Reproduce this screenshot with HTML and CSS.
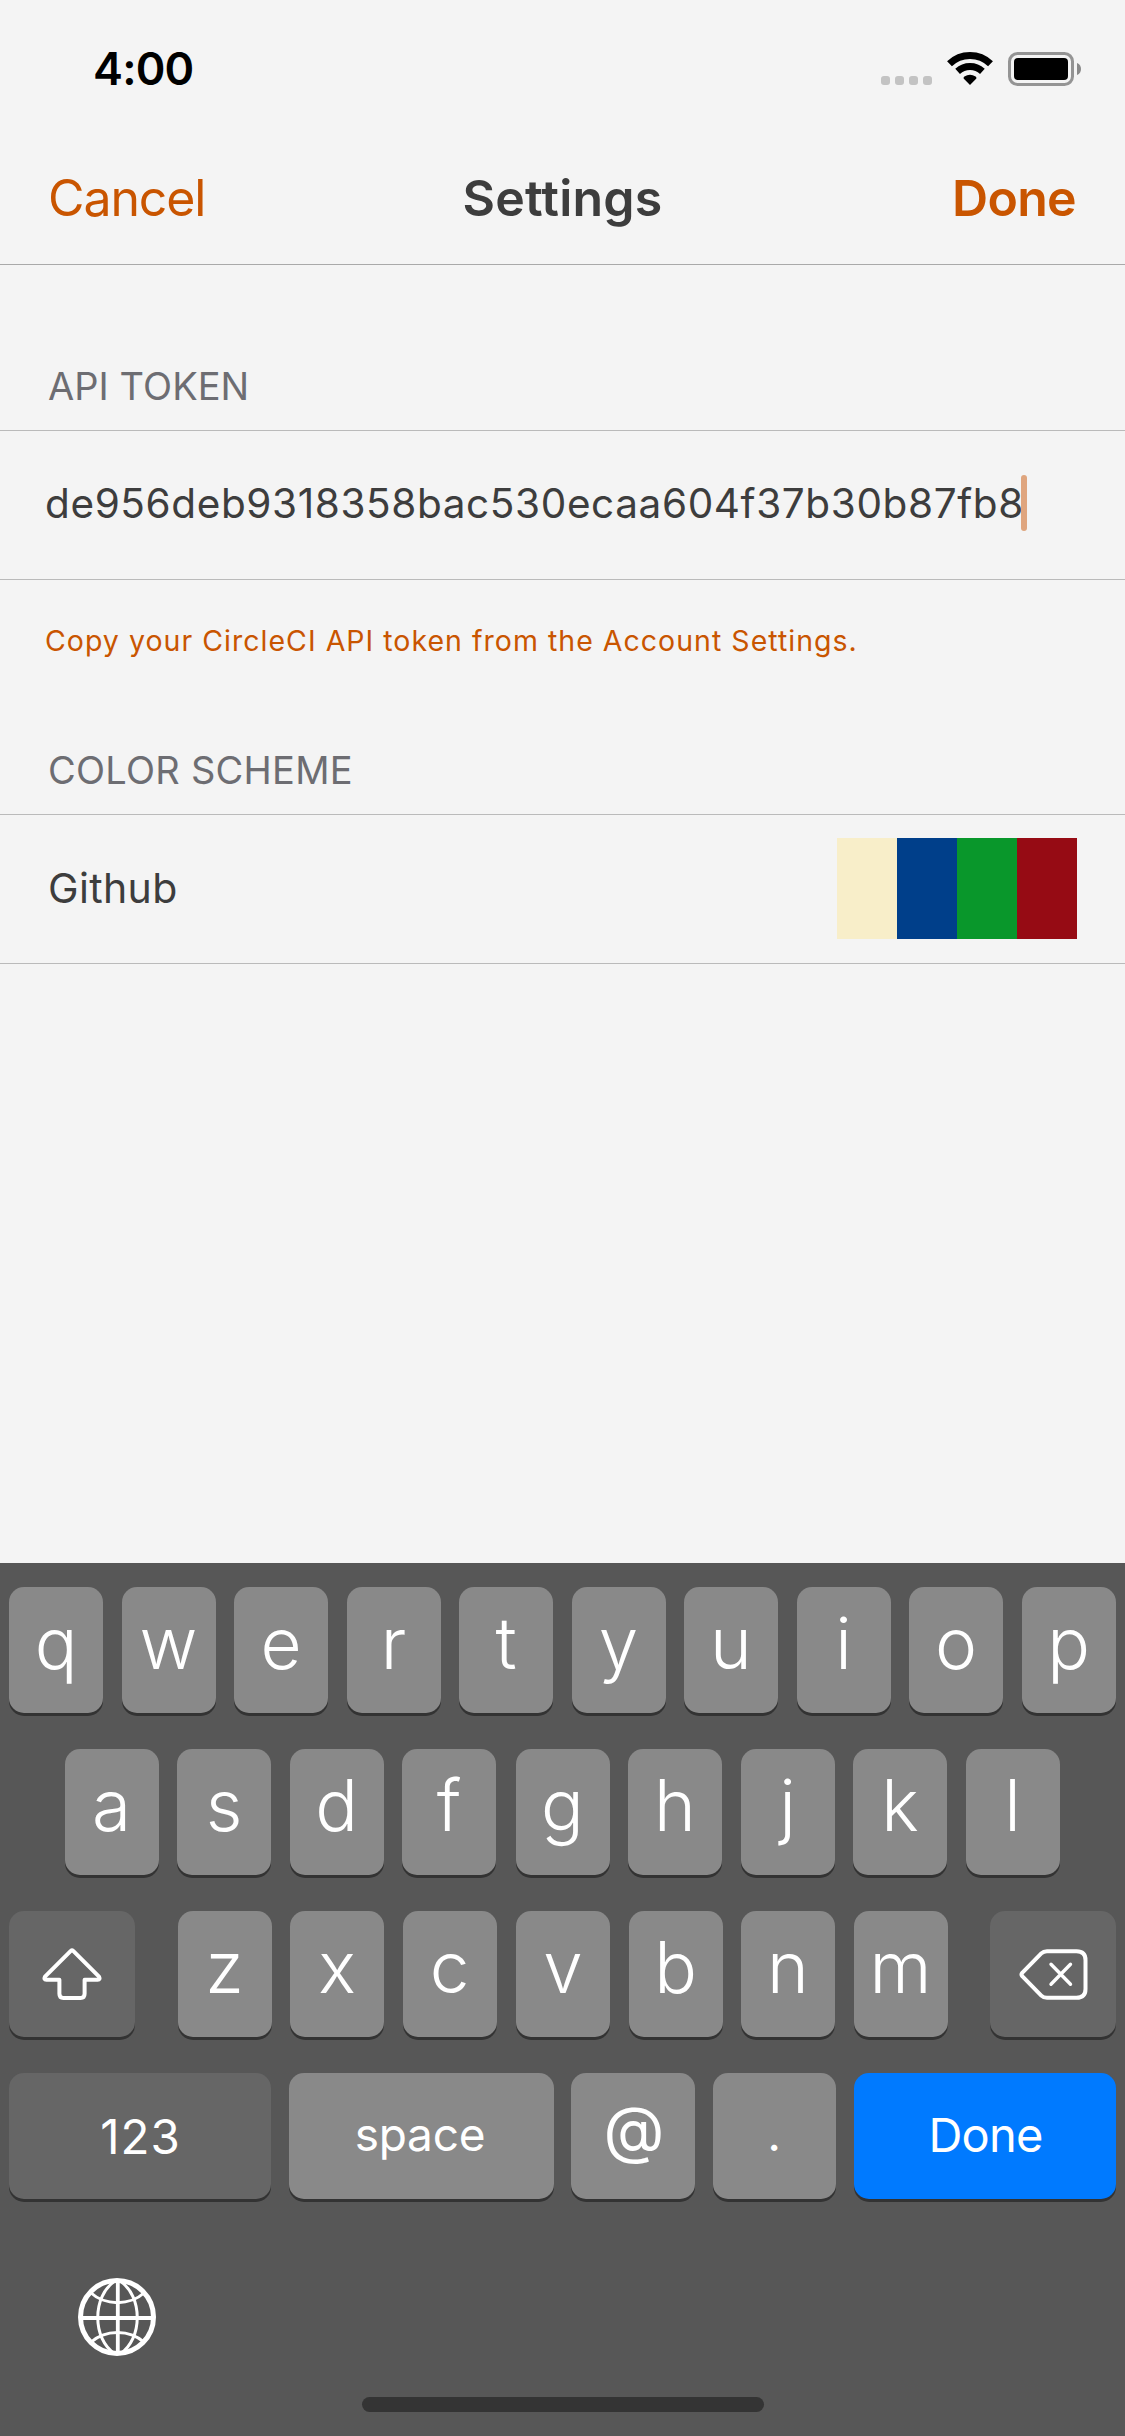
FILE: index.html
```html
<!DOCTYPE html>
<html lang="en">
<head>
<meta charset="utf-8">
<title>Settings</title>
<link rel="stylesheet" href="styles.css">
</head>
<body>
<div class="screen">
  <div class="status-bar">
    <span class="time">4:00</span>
    <div class="status-icons">
      <div class="signal"><i></i><i></i><i></i><i></i></div>
      <svg class="wifi" width="46" height="33" viewBox="0 0 46 33" fill="none" stroke="#000" stroke-width="7">
        <path d="M2.5 11.8A29.5 29.5 0 0 1 43.5 11.8"/>
        <path d="M10.6 19.3A18.5 18.5 0 0 1 35.4 19.3"/>
        <path d="M23 33L16.6 26.4Q16.4 25.2 17.4 24.6A10 10 0 0 1 28.6 24.6Q29.6 25.2 29.4 26.4Z" fill="#000" stroke="none"/>
      </svg>
      <svg class="battery" width="73" height="34" viewBox="0 0 73 34">
        <rect x="1.5" y="1.5" width="63" height="31" rx="8" fill="none" stroke="#949494" stroke-width="3"/>
        <rect x="6" y="6" width="54" height="22" rx="4" fill="#000"/>
        <path d="M69 11C72 12 73 14.5 73 17S72 22 69 23Z" fill="#8a8a8a"/>
      </svg>
    </div>
  </div>

  <header class="nav">
    <a class="nav-cancel">Cancel</a>
    <h1 class="nav-title">Settings</h1>
    <a class="nav-done">Done</a>
  </header>

  <main class="content">
    <h2 class="section-title section-title-first">API TOKEN</h2>
    <div class="cell cell-input"><span class="token">de956deb9318358bac530ecaa604f37b30b87fb8</span><span class="caret"></span></div>
    <p class="hint">Copy your CircleCI API token from the Account Settings.</p>
    <h2 class="section-title section-title-color">COLOR SCHEME</h2>
    <div class="cell cell-scheme">
      <span class="scheme-name">Github</span>
      <div class="swatches"><i class="cream"></i><i class="blue"></i><i class="green"></i><i class="red"></i></div>
    </div>
  </main>

  <div class="keyboard">
    <div class="row">
      <span class="key">q</span><span class="key">w</span><span class="key">e</span><span class="key">r</span><span class="key">t</span><span class="key">y</span><span class="key">u</span><span class="key">i</span><span class="key">o</span><span class="key">p</span>
    </div>
    <div class="row row-home">
      <span class="key">a</span><span class="key">s</span><span class="key">d</span><span class="key">f</span><span class="key key-mid">g</span><span class="key">h</span><span class="key">j</span><span class="key">k</span><span class="key">l</span>
    </div>
    <div class="row row-lower">
      <span class="key key-special key-icon">
        <svg width="60" height="52" viewBox="0 0 60 52" fill="none" stroke="#fff" stroke-width="4" stroke-linejoin="round">
          <path d="M28.8 2.9Q30 1.8 31.2 2.9L57 28.6Q58.6 31.6 55.5 31.8H42.6V45.8Q42.6 50 38.6 50H21.4Q17.4 50 17.4 45.8V31.8H4.5Q1.4 31.6 3 28.6Z"/>
        </svg>
      </span>
      <div class="letters"><span class="key">z</span><span class="key">x</span><span class="key">c</span><span class="key key-mid">v</span><span class="key">b</span><span class="key">n</span><span class="key">m</span></div>
      <span class="key key-special key-icon">
        <svg width="69" height="51" viewBox="0 0 69 51" fill="none" stroke="#fff" stroke-width="4" stroke-linejoin="round" stroke-linecap="round">
          <path d="M28 2.2H57.5Q66.5 2.2 66.5 11V40Q66.5 48.8 57.5 48.8H28Q24.5 48.8 22.3 46.6L3.2 27.2Q1.8 25.5 3.2 23.8L22.3 4.4Q24.5 2.2 28 2.2Z"/>
          <path d="M32 15.2L51.5 35.2M51.5 15.2L32 35.2" stroke-width="3.4"/>
        </svg>
      </span>
    </div>
    <div class="row row-bottom">
      <span class="key key-special key-numbers">123</span>
      <span class="key key-space">space</span>
      <span class="key key-at">@</span>
      <span class="key key-dot">.</span>
      <span class="key key-done">Done</span>
    </div>
    <div class="globe-row">
      <svg width="78" height="78" viewBox="0 0 78 78" fill="none" stroke="#fff" stroke-width="3">
        <circle cx="39" cy="39" r="36.5" stroke-width="5"/>
        <path d="M39.8 2V76M2 40H76" stroke-width="3.8"/>
        <path d="M37 3C14 18 14 61 37 76M42 3C65 18 65 61 42 76"/>
        <path d="M12.500 14.500C27 28 52 28 66.500 14.500M12.500 64.500C27 51 52 51 66.500 64.500"/>
      </svg>
    </div>
    <div class="home-indicator"></div>
  </div>
</div>
</body>
</html>
```
FILE: styles.css
```css
* { box-sizing: border-box; }

body {
  margin: 0;
  background: #f4f4f4;
  color: #3d3d3d;
  font-family: Inter, "Liberation Sans", sans-serif;
}

.screen {
  width: 1125px;
  height: 2436px;
  display: flex;
  flex-direction: column;
  overflow: hidden;
}

/* Status bar */
.status-bar {
  height: 132px;
  padding: 5px 44px 0 93px;
  display: flex;
  justify-content: space-between;
  align-items: center;
}
.time { font-size: 45px; font-weight: 600; letter-spacing: -.8px; color: #000; }
.status-icons { display: flex; gap: 15px; align-items: flex-end; }
.signal { display: flex; gap: 5px; }
.signal i { width: 9px; height: 9px; border-radius: 3px; background: #c3c3c3; }
.signal, .wifi { margin-bottom: 1px; }
.status-icons svg { display: block; }

/* Navigation bar */
.nav {
  height: 133px;
  padding: 0 49px 0 48px;
  display: grid;
  grid-template-columns: 1fr auto 1fr;
  align-items: center;
  border-bottom: 1px solid #a9a9a9;
  font-size: 50px;
}
.nav-cancel { color: #c95500; letter-spacing: -1.1px; }
.nav-title { margin: 0; padding-left: 1px; font-size: 50px; font-weight: 600; letter-spacing: .2px; }
.nav-done { color: #c95500; font-weight: 600; letter-spacing: -.7px; text-align: right; }

/* Settings list */
.content { flex: 1; }
.section-title {
  margin: 0;
  padding: 0 48px 24px;
  font-size: 38px;
  line-height: 40px;
  font-weight: 400;
  color: #6d6d72;
}
.section-title-first { padding-top: 101px; letter-spacing: .05px; }
.section-title-color { padding-top: 89px; letter-spacing: .25px; }
.cell {
  height: 150px;
  padding: 0 48px;
  display: flex;
  align-items: center;
  border-top: 1px solid #bababa;
  border-bottom: 1px solid #bababa;
}
.cell-input { padding: 0 45px 4px; }
.token { font-size: 40.5px; letter-spacing: .61px; }
.caret { width: 6px; height: 56px; margin-left: -3px; border-radius: 3px; background: #dfa57e; }
.hint {
  margin: 0;
  padding: 41px 45px 0;
  font-size: 28.5px;
  line-height: 40px;
  letter-spacing: 1.02px;
  color: #c95500;
}
.cell-scheme { justify-content: space-between; padding-bottom: 1px; }
.scheme-name { padding-bottom: 2px; font-size: 41px; letter-spacing: .35px; }
.swatches { display: flex; height: 101px; }
.swatches i { width: 60px; }
.cream { background: #f8eec9; }
.blue { background: #003f8a; }
.green { background: #09972b; }
.red { background: #960b14; }

/* Keyboard */
.keyboard {
  height: 873px;
  padding: 24px 9px 0;
  display: flex;
  flex-direction: column;
  background: #575757;
}
.row { display: flex; gap: 18.5px; height: 126px; margin-bottom: 36px; }
.letters { display: flex; gap: 18.5px; }
.row-home { padding-left: 55.5px; }
.row-lower { justify-content: space-between; }
.key {
  width: 94px;
  height: 126px;
  flex: none;
  padding-bottom: 14px;
  display: flex;
  align-items: center;
  justify-content: center;
  border-radius: 15px;
  background: #898989;
  box-shadow: 0 3px 0 #333;
  color: #fff;
  font-size: 71px;
  font-weight: 350;
}
.key-mid { margin-left: 1px; }
.key-special { background: #666; }
.key-icon { width: 126px; padding: 0; }
.row-bottom { margin-bottom: 0; gap: 17.5px; }
.key-numbers { width: 262px; padding: 1px 0 0 1px; font-size: 47.5px; font-weight: 400; letter-spacing: 1px; }
.key-space { width: 265px; padding: 0 2px 4px 0; font-size: 46px; font-weight: 400; letter-spacing: -.25px; }
.key-at { width: 124px; padding-left: 2px; font-size: 63px; font-weight: 400; }
.key-dot { width: 123.5px; padding-bottom: 5px; font-size: 48px; font-weight: 400; }
.key-done { width: 262px; padding: 0 0 4px 2px; background: #007aff; font-size: 47px; font-weight: 400; letter-spacing: -.8px; }
.globe-row { padding: 79px 0 0 69px; }
.globe-row svg { display: block; }
.home-indicator {
  width: 402px;
  height: 15px;
  margin: 41px auto 0;
  border-radius: 8px;
  background: #343434;
}
```
